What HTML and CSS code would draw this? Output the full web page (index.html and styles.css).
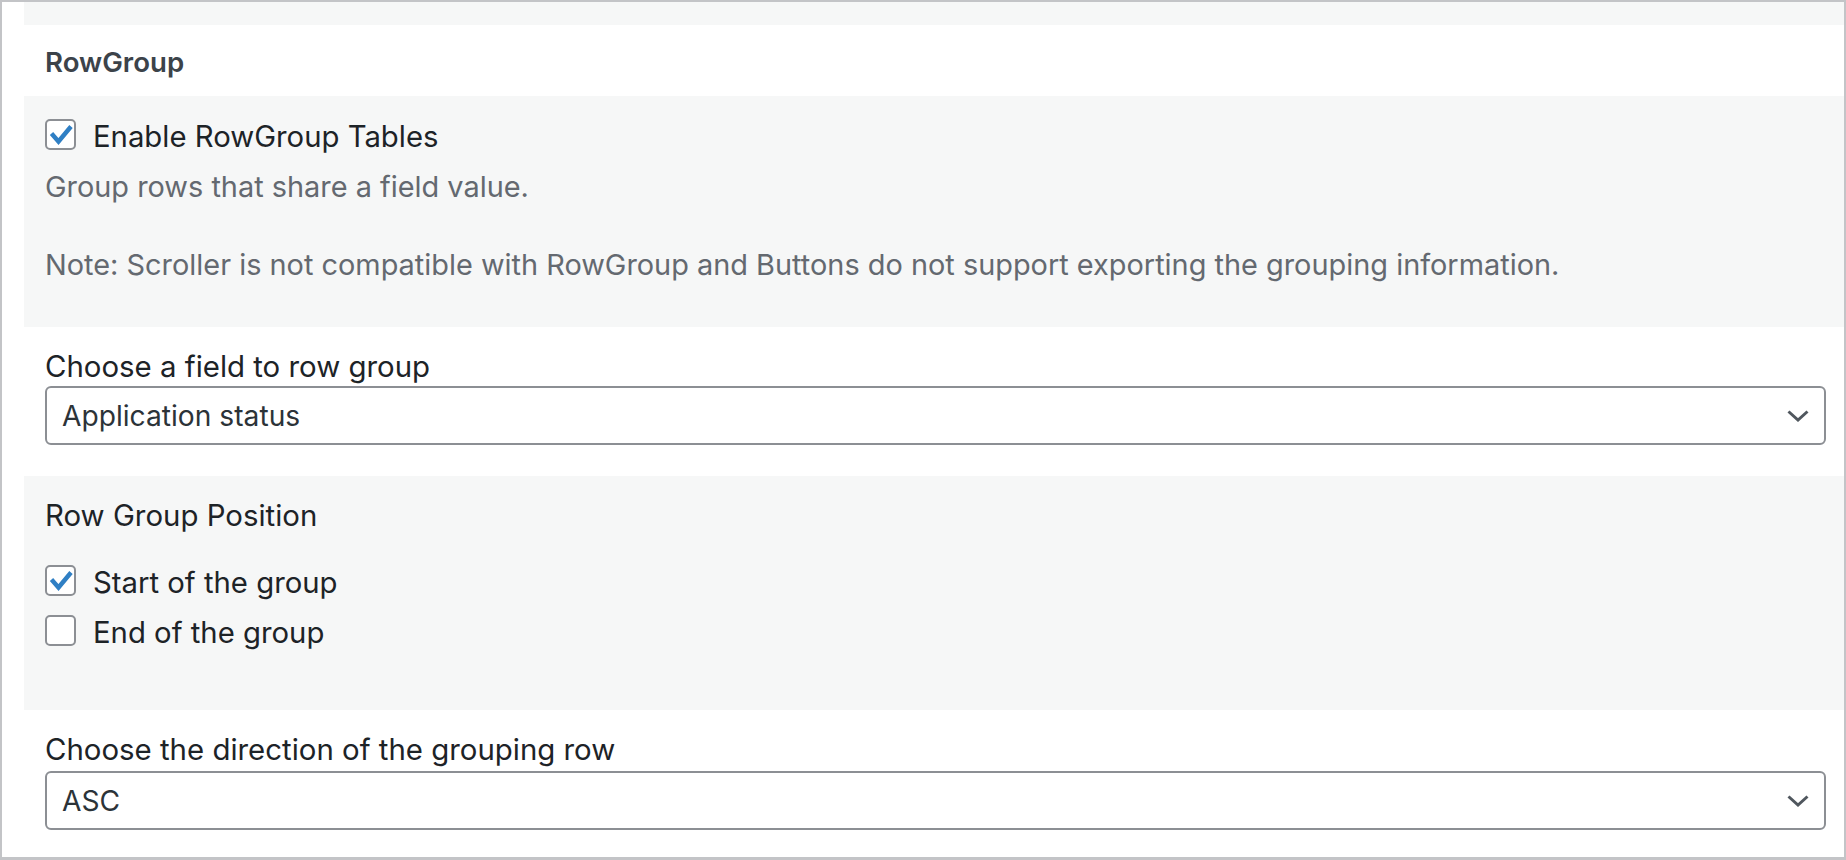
FILE: index.html
```html
<!DOCTYPE html>
<html lang="en">
<head>
<meta charset="utf-8">
<title>RowGroup settings</title>
<link rel="stylesheet" href="styles.css">
</head>
<body>
<div class="frame">
  <div class="band-top"></div>
  <div class="section-title">RowGroup</div>

  <div class="panel panel-enable">
    <label class="check-row">
      <span class="checkbox is-checked">
        <svg viewBox="0 0 31 31" width="31" height="31" aria-hidden="true"><path d="M6.5 14.5 L13.5 22.5 L26 7.5" fill="none" stroke="#2f7fc4" stroke-width="4.4" stroke-linejoin="miter"/></svg>
      </span>
      <span class="check-text">Enable RowGroup Tables</span>
    </label>
    <p class="desc desc-first">Group rows that share a field value.</p>
    <p class="desc desc-note">Note: Scroller is not compatible with RowGroup and Buttons do not support exporting the grouping information.</p>
  </div>

  <div class="field field-one">
    <div class="field-label">Choose a field to row group</div>
    <div class="select">
      <span class="select-value">Application status</span>
      <svg class="chevron" viewBox="0 0 22 12" width="22" height="12" aria-hidden="true"><path d="M1.5 1.5 L11 10 L20.5 1.5" fill="none" stroke="#50575e" stroke-width="3"/></svg>
    </div>
  </div>

  <div class="panel panel-position">
    <div class="field-label">Row Group Position</div>
    <div class="check-list">
      <label class="check-row">
        <span class="checkbox is-checked">
          <svg viewBox="0 0 31 31" width="31" height="31" aria-hidden="true"><path d="M6.5 14.5 L13.5 22.5 L26 7.5" fill="none" stroke="#2f7fc4" stroke-width="4.4" stroke-linejoin="miter"/></svg>
        </span>
        <span class="check-text">Start of the group</span>
      </label>
      <label class="check-row">
        <span class="checkbox"></span>
        <span class="check-text">End of the group</span>
      </label>
    </div>
  </div>

  <div class="field field-two">
    <div class="field-label">Choose the direction of the grouping row</div>
    <div class="select">
      <span class="select-value">ASC</span>
      <svg class="chevron" viewBox="0 0 22 12" width="22" height="12" aria-hidden="true"><path d="M1.5 1.5 L11 10 L20.5 1.5" fill="none" stroke="#50575e" stroke-width="3"/></svg>
    </div>
  </div>
</div>
</body>
</html>
```
FILE: styles.css
```css
html, body {
  margin: 0;
  padding: 0;
  background: #ffffff;
}

body {
  font-family: Inter, "Noto Sans", "Liberation Sans", sans-serif;
  color: #1d2327;
}

.frame {
  box-sizing: border-box;
  width: 1846px;
  height: 860px;
  border: 2px solid #c3c4c7;
  border-bottom-width: 3px;
  padding-left: 22px;
  background: #ffffff;
  overflow: hidden;
  display: flex;
  flex-direction: column;
}

.band-top {
  height: 23px;
  background: #f6f7f7;
  flex: none;
}

.section-title {
  height: 71px;
  flex: none;
  display: flex;
  align-items: center;
  padding-left: 21px;
  padding-top: 2px;
  box-sizing: border-box;
  font-size: 27.6px;
  font-weight: 600;
  color: #3c434a;
}

.panel {
  background: #f6f7f7;
  flex: none;
  box-sizing: border-box;
  padding: 0 18px 0 21px;
}

.panel-enable {
  height: 231px;
  padding-top: 23px;
}

.check-row {
  display: flex;
  align-items: center;
  gap: 17px;
  height: 31px;
}

.checkbox {
  box-sizing: border-box;
  width: 31px;
  height: 31px;
  flex: none;
  border: 2px solid #8c8f94;
  border-radius: 5px;
  background: #ffffff;
  position: relative;
}

.checkbox svg {
  position: absolute;
  left: -2px;
  top: -2px;
}

.check-text {
  font-size: 29.3px;
  line-height: 36px;
  padding-top: 4px;
  color: #1d2327;
}

.desc {
  margin: 0;
  font-size: 28.9px;
  line-height: 36px;
  color: #646970;
}

.desc-first {
  margin-top: 19px;
}

.desc-note {
  margin-top: 42px;
}

.field {
  flex: none;
  box-sizing: border-box;
  padding: 22px 18px 0 21px;
}

.field-one {
  height: 149px;
}

.field-two {
  height: 147px;
}

.field-label {
  font-size: 29.4px;
  line-height: 36px;
  color: #1d2327;
}

.select {
  box-sizing: border-box;
  height: 59px;
  margin-top: 1px;
  border: 2px solid #8c8f94;
  border-radius: 6px;
  background: #ffffff;
  display: flex;
  align-items: center;
  justify-content: space-between;
  padding: 0 15px 0 15px;
}

.select-value {
  font-size: 28.2px;
  color: #2c3338;
}

.chevron {
  flex: none;
}

.field-two .select {
  margin-top: 3px;
}

.panel-position {
  height: 234px;
  padding-top: 22px;
}

.check-list {
  margin-top: 31px;
  display: flex;
  flex-direction: column;
  gap: 19px;
}
```
